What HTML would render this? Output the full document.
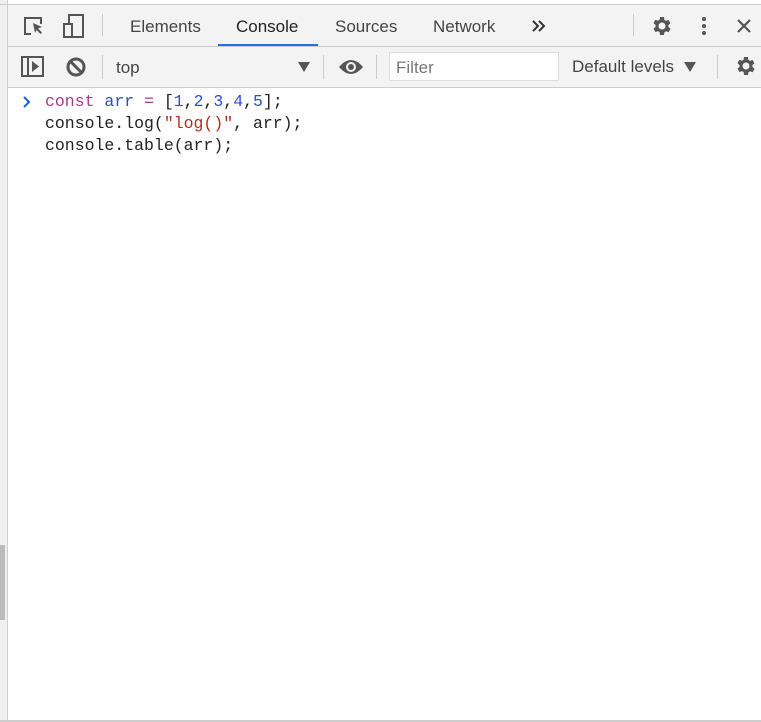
<!DOCTYPE html>
<html><head><style>
body{margin:0;width:761px;height:722px;overflow:hidden;background:#fff;font-family:"Liberation Sans",sans-serif;position:relative}
.abs{position:absolute}
.tb{left:8px;right:0;background:#f3f3f3;border-bottom:1px solid #ccc}
.t{font-size:17px;color:#444;position:absolute}
.sep{position:absolute;width:1px;background:#ccc}
.code{font-family:"Liberation Mono",monospace;font-size:16.5px;color:#222;line-height:22px;position:absolute;left:45px;top:91px;white-space:pre}
</style></head><body>
<div class="abs" style="left:0;top:0;width:7px;height:722px;background:#f0f0f0;border-right:1px solid #cfcfcf"></div>
<div class="abs" style="left:0;top:545px;width:5px;height:75px;background:#bbb"></div>
<div class="abs" style="left:0;top:4px;width:761px;height:1px;background:#ccc"></div>
<div class="abs" style="left:0;top:720px;width:761px;height:2px;background:#ccc"></div>
<div class="abs tb" style="top:5px;height:41px"></div>
<div class="abs tb" style="top:47px;height:40px"></div>
<svg class="abs" style="left:22px;top:14px" width="24" height="24" viewBox="0 0 24 24" fill="none" stroke="#555" stroke-width="2"><path d="M9 20H3V4h16v6"/><path d="M11 9l9 4-4 1.5 4 4-1.5 1.5-4-4L13 19z" fill="#555" stroke="none"/></svg>
<svg class="abs" style="left:61px;top:13px" width="26" height="26" viewBox="0 0 26 26" fill="none" stroke="#555" stroke-width="2"><rect x="8" y="2" width="14" height="22"/><rect x="3" y="11" width="8" height="13" fill="#f3f3f3"/></svg>
<div class="sep" style="left:102px;top:14px;height:22px"></div>
<div class="t" style="left:130px;top:17px">Elements</div>
<div class="t" style="left:236px;top:17px;color:#222">Console</div>
<div class="abs" style="left:218px;top:44px;width:100px;height:2px;background:#1a73e8"></div>
<div class="t" style="left:335px;top:17px">Sources</div>
<div class="t" style="left:433px;top:17px">Network</div>
<svg class="abs" style="left:532px;top:20px" width="14" height="12" fill="none" stroke="#333" stroke-width="2"><path d="M1 1l5 5-5 5M7 1l5 5-5 5"/></svg>
<div class="sep" style="left:633px;top:14px;height:22px"></div>
<svg class="abs" style="left:649px;top:14px" width="24" height="24" viewBox="0 0 24 24"><path fill="#555" d="M19.4 13a7.5 7.5 0 000-2l2.1-1.6-2-3.5-2.5 1a7.5 7.5 0 00-1.7-1L15 3h-4l-.4 2.7a7.5 7.5 0 00-1.7 1l-2.5-1-2 3.5L6.6 11a7.5 7.5 0 000 2l-2.1 1.6 2 3.5 2.5-1a7.5 7.5 0 001.7 1L11 21h4l.4-2.7a7.5 7.5 0 001.7-1l2.5 1 2-3.5zM13 15.5a3.5 3.5 0 110-7 3.5 3.5 0 010 7z"/></svg>
<svg class="abs" style="left:699px;top:15px" width="10" height="22"><circle cx="5" cy="4" r="2" fill="#555"/><circle cx="5" cy="11" r="2" fill="#555"/><circle cx="5" cy="18" r="2" fill="#555"/></svg>
<svg class="abs" style="left:736px;top:18px" width="16" height="16" stroke="#555" stroke-width="2.2"><path d="M2 2l12 12M14 2L2 14"/></svg>
<svg class="abs" style="left:21px;top:56px" width="24" height="22" fill="none" stroke="#555" stroke-width="2"><rect x="1" y="1" width="21" height="19"/><path d="M7 1v19"/><path d="M11 5l7 5.5-7 5.5z" fill="#555" stroke="none"/></svg>
<svg class="abs" style="left:65px;top:56px" width="22" height="22" fill="none" stroke="#555" stroke-width="3"><circle cx="11" cy="11" r="8"/><path d="M5.5 5.5l11 11"/></svg>
<div class="sep" style="left:102px;top:55px;height:24px"></div>
<div class="t" style="left:116px;top:58px">top</div>
<svg class="abs" style="left:298px;top:62px" width="12" height="10"><path d="M0 0h12L6 10z" fill="#555"/></svg>
<div class="sep" style="left:323px;top:55px;height:24px"></div>
<svg class="abs" style="left:338px;top:58px" width="26" height="18"><path d="M1 9Q13-5 25 9Q13 23 1 9z" fill="#555"/><circle cx="13" cy="9" r="5" fill="#f3f3f3"/><circle cx="13" cy="9" r="3" fill="#555"/></svg>
<div class="sep" style="left:376px;top:55px;height:24px"></div>
<div class="abs" style="left:389px;top:52px;width:168px;height:27px;background:#fff;border:1px solid #ddd"></div>
<div class="t" style="left:396px;top:58px;color:#777">Filter</div>
<div class="t" style="left:572px;top:57px;color:#444">Default levels</div>
<svg class="abs" style="left:684px;top:62px" width="12" height="10"><path d="M0 0h12L6 10z" fill="#555"/></svg>
<div class="sep" style="left:717px;top:55px;height:24px"></div>
<svg class="abs" style="left:733px;top:54px" width="24" height="24" viewBox="0 0 24 24"><path fill="#555" d="M19.4 13a7.5 7.5 0 000-2l2.1-1.6-2-3.5-2.5 1a7.5 7.5 0 00-1.7-1L15 3h-4l-.4 2.7a7.5 7.5 0 00-1.7 1l-2.5-1-2 3.5L6.6 11a7.5 7.5 0 000 2l-2.1 1.6 2 3.5 2.5-1a7.5 7.5 0 001.7 1L11 21h4l.4-2.7a7.5 7.5 0 001.7-1l2.5 1 2-3.5zM13 15.5a3.5 3.5 0 110-7 3.5 3.5 0 010 7z"/></svg>
<svg class="abs" style="left:22px;top:96px" width="10" height="12" fill="none" stroke="#1a5fd8" stroke-width="2"><path d="M2 1l5 5-5 5"/></svg>
<div class="code"><span style="color:#a13e8c">const</span> <span style="color:#2a4fb0">arr</span> <span style="color:#a13e8c">=</span> [<span style="color:#2a4fd8">1</span>,<span style="color:#2a4fd8">2</span>,<span style="color:#2a4fd8">3</span>,<span style="color:#2a4fd8">4</span>,<span style="color:#2a4fd8">5</span>];
console.log(<span style="color:#b03020">"log()"</span>, arr);
console.table(arr);</div>
</body></html>
